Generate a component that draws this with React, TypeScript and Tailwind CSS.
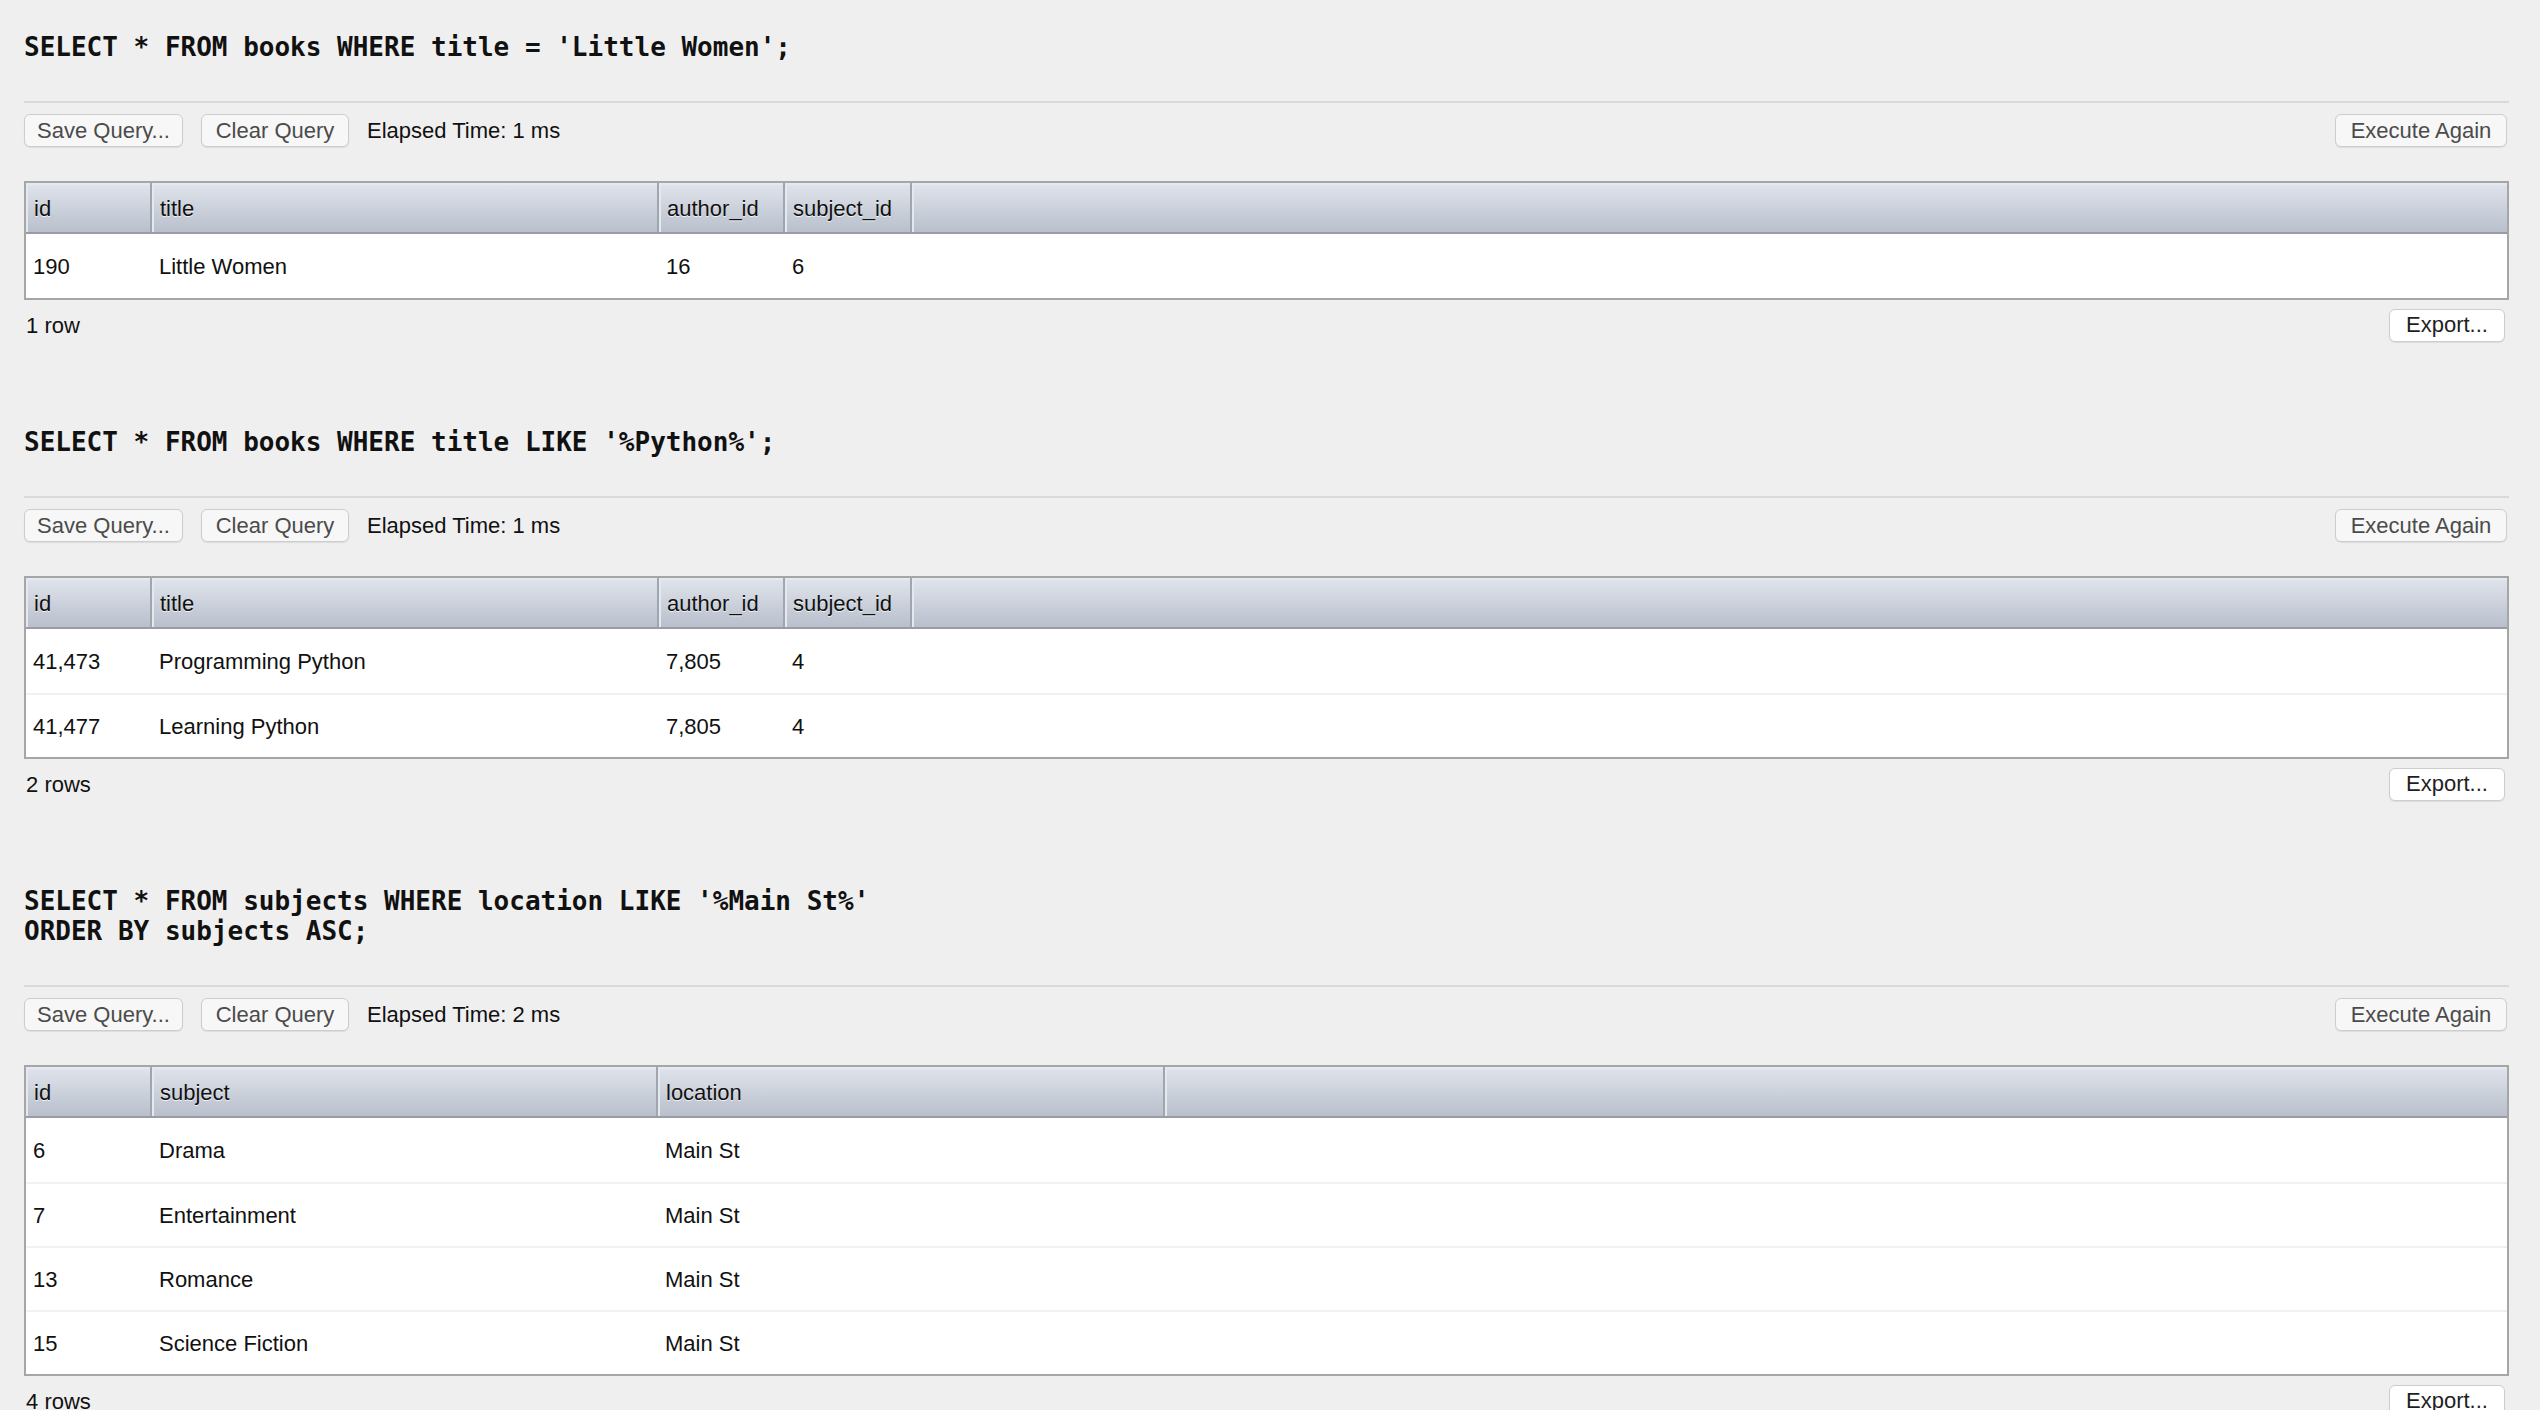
import clsx from 'clsx';

type Column = { key: string; label: string; width: string };

type QueryResult = {
  sql: string[];
  elapsed: string;
  columns: Column[];
  rows: Record<string, string>[];
};

const results: QueryResult[] = [
  {
    sql: ["SELECT * FROM books WHERE title = 'Little Women';"],
    elapsed: '1 ms',
    columns: [
      { key: 'id', label: 'id', width: 'w-[126px]' },
      { key: 'title', label: 'title', width: 'w-[507px]' },
      { key: 'author_id', label: 'author_id', width: 'w-[126px]' },
      { key: 'subject_id', label: 'subject_id', width: 'w-[127px]' },
    ],
    rows: [{ id: '190', title: 'Little Women', author_id: '16', subject_id: '6' }],
  },
  {
    sql: ["SELECT * FROM books WHERE title LIKE '%Python%';"],
    elapsed: '1 ms',
    columns: [
      { key: 'id', label: 'id', width: 'w-[126px]' },
      { key: 'title', label: 'title', width: 'w-[507px]' },
      { key: 'author_id', label: 'author_id', width: 'w-[126px]' },
      { key: 'subject_id', label: 'subject_id', width: 'w-[127px]' },
    ],
    rows: [
      { id: '41,473', title: 'Programming Python', author_id: '7,805', subject_id: '4' },
      { id: '41,477', title: 'Learning Python', author_id: '7,805', subject_id: '4' },
    ],
  },
  {
    sql: ["SELECT * FROM subjects WHERE location LIKE '%Main St%'", 'ORDER BY subjects ASC;'],
    elapsed: '2 ms',
    columns: [
      { key: 'id', label: 'id', width: 'w-[126px]' },
      { key: 'subject', label: 'subject', width: 'w-[506px]' },
      { key: 'location', label: 'location', width: 'w-[507px]' },
    ],
    rows: [
      { id: '6', subject: 'Drama', location: 'Main St' },
      { id: '7', subject: 'Entertainment', location: 'Main St' },
      { id: '13', subject: 'Romance', location: 'Main St' },
      { id: '15', subject: 'Science Fiction', location: 'Main St' },
    ],
  },
];

function MacButton({ label, width, dark }: { label: string; width: string; dark?: boolean }) {
  return (
    <button
      className={clsx(
        'h-[33px] shrink-0 rounded-[6px] border border-[#cdcdcd] text-[22px] leading-none shadow-[0_1px_1px_rgba(0,0,0,0.08)]',
        width,
        dark ? 'bg-white text-[#1f1f1f]' : 'bg-[#f7f7f7] text-[#4b4b4b]'
      )}
    >
      {label}
    </button>
  );
}

function ResultSection({ result }: { result: QueryResult }) {
  const rowCount = result.rows.length;
  return (
    <section className="mb-[86px]">
      {/* Query text */}
      <pre className="font-['DejaVu_Sans_Mono','Liberation_Mono',monospace] text-[26px] font-bold leading-[30px] text-[#111]">
        {result.sql.join('\n')}
      </pre>

      <div className="mt-[39px] h-[2px] bg-[#d9d9d9]" />

      {/* Toolbar */}
      <div className="mt-[11px] flex items-center">
        <MacButton label="Save Query..." width="w-[159px]" />
        <div className="w-[18px]" />
        <MacButton label="Clear Query" width="w-[148px]" />
        <span className="ml-[18px] text-[22px] text-[#111]">Elapsed Time: {result.elapsed}</span>
        <div className="flex-1" />
        <div className="mr-[2px]">
          <MacButton label="Execute Again" width="w-[172px]" />
        </div>
      </div>

      {/* Results grid */}
      <div className="mt-[34px] border-2 border-[#a6a6a6] bg-white">
        <div className="flex h-[51px] border-b-2 border-[#989da5] bg-gradient-to-b from-[#e0e4ec] to-[#b9c0cc] text-[22px] text-[#111] [text-shadow:0_1px_0_rgba(255,255,255,0.75)]">
          {result.columns.map((col) => (
            <div
              key={col.key}
              className={clsx(
                'flex shrink-0 items-center border-r-2 border-[#a1a6ae] pl-[8px] pt-[2px] shadow-[inset_2px_0_0_#e4e8ef,inset_0_2px_0_#e6e9f0]',
                col.width
              )}
            >
              {col.label}
            </div>
          ))}
          <div className="flex-1 shadow-[inset_2px_0_0_#e4e8ef,inset_0_2px_0_#e6e9f0]" />
        </div>
        {result.rows.map((row, i) => (
          <div
            key={i}
            className={clsx('flex h-[64px] items-center text-[22px] text-[#111]', i > 0 && 'border-t-2 border-[#f1f1f1]')}
          >
            {result.columns.map((col) => (
              <div key={col.key} className={clsx('shrink-0 pl-[7px]', col.width)}>
                {row[col.key]}
              </div>
            ))}
          </div>
        ))}
      </div>

      {/* Footer */}
      <div className="mt-[9px] flex h-[32px] items-center">
        <span className="pl-[2px] text-[22px] text-[#111]">
          {rowCount} {rowCount === 1 ? 'row' : 'rows'}
        </span>
        <div className="flex-1" />
        <div className="mr-[4px]">
          <MacButton label="Export..." width="w-[116px]" dark />
        </div>
      </div>
    </section>
  );
}

export default function App() {
  return (
    <div className="min-h-screen bg-[#efefef] pl-[24px] pr-[31px] pt-[32px] font-['Liberation_Sans',Arial,sans-serif]">
      {results.map((r, i) => (
        <ResultSection key={i} result={r} />
      ))}
    </div>
  );
}
